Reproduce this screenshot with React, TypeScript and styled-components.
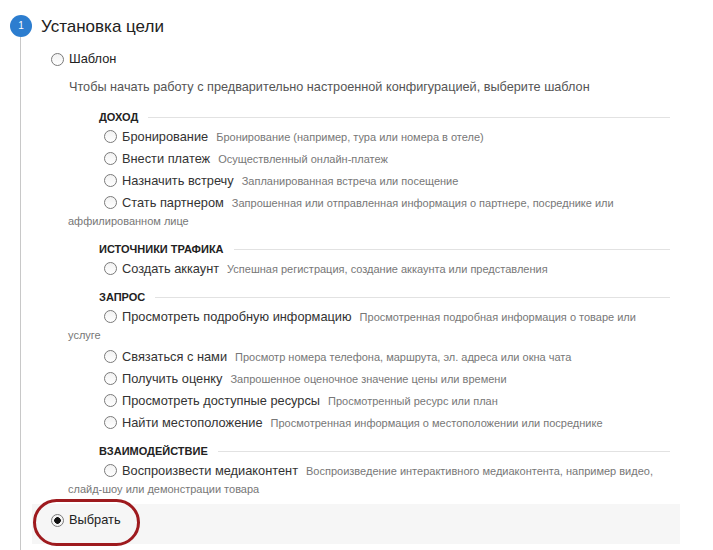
import styled, { createGlobalStyle } from 'styled-components'

const GlobalStyle = createGlobalStyle`
  html, body {
    margin: 0;
    padding: 0;
    background: #fff;
  }
  body {
    font-family: 'Liberation Sans', Arial, sans-serif;
    color: #333;
  }
`

const Step = styled.div`
  display: flex;
  min-height: 100vh;
  width: 713px;
  box-sizing: border-box;
`

const Rail = styled.div`
  width: 32px;
  flex: none;
  display: flex;
  flex-direction: column;
  align-items: flex-start;
  padding: 15px 0 0 10px;
  box-sizing: border-box;
`

const Badge = styled.div`
  width: 22px;
  height: 22px;
  border-radius: 50%;
  background: #2c7dcf;
  color: #fff;
  font-size: 10px;
  line-height: 22px;
  text-align: center;
  flex: none;
`

const RailLine = styled.div`
  flex: 1;
  width: 1px;
  margin-left: 10px;
  background: #c8c8c8;
`

const Content = styled.div`
  width: 648px;
  padding-top: 16px;
`

const Title = styled.div`
  padding-left: 9px;
  font-size: 17px;
  line-height: 22px;
  color: #222;
`

const Option = styled.div`
  position: relative;
  display: flex;
  align-items: center;
  padding-left: 19px;
  font-size: 12.8px;
  line-height: 18px;
  color: #222;
`

const TemplateOption = styled(Option)`
  margin-top: 12px;
`

const Intro = styled.div`
  margin-top: 10px;
  padding-left: 37px;
  font-size: 12.7px;
  line-height: 18px;
  color: #555;
`

const Groups = styled.div`
  margin: 0 10px 0 36px;
`

const Group = styled.div`
  margin-top: 11px;

  &:first-child {
    margin-top: 13px;
  }
`

const GroupHeader = styled.div`
  display: flex;
  align-items: center;
  gap: 10px;
  padding-left: 31px;
  font-size: 11px;
  font-weight: bold;
  line-height: 16px;
  color: #222;
  text-transform: uppercase;

  &::after {
    content: '';
    flex: 1;
    height: 1px;
    background: #e2e2e2;
  }
`

const Item = styled.div`
  margin-top: 4px;
  text-indent: 36px;
  font-size: 11px;
  line-height: 18px;

  &:nth-child(2) {
    margin-top: 3px;
  }
`

const Radio = styled.span<{ $checked?: boolean }>`
  display: inline-block;
  width: 13px;
  height: 13px;
  box-sizing: border-box;
  border: 1px solid #7a7a7a;
  border-radius: 50%;
  text-indent: 0;
  vertical-align: -2px;
  margin-right: 5px;
  flex: none;
  background: ${(p) =>
    p.$checked
      ? 'radial-gradient(circle, #111 0 3px, #f4f4f4 3.6px)'
      : 'linear-gradient(#f2f2f2, #fff)'};
`

const Label = styled.span`
  font-size: 12.8px;
  line-height: 1;
  color: #333;
  margin-right: 8px;
`

const Hint = styled.span`
  font-size: 11px;
  line-height: 1;
  color: #777;
`

const Selected = styled.div`
  position: relative;
  margin-top: 6px;
  padding: 7px 0 15px;
  background: #f6f6f6;
`

const Highlight = styled.div`
  position: absolute;
  left: 1px;
  top: -5px;
  width: 107px;
  height: 47px;
  box-sizing: border-box;
  border: 3px solid #9e1a1e;
  border-radius: 24px;
  pointer-events: none;
`

const groups: { title: string; items: [string, string][] }[] = [
  {
    title: 'Доход',
    items: [
      ['Бронирование', 'Бронирование (например, тура или номера в отеле)'],
      ['Внести платеж', 'Осуществленный онлайн-платеж'],
      ['Назначить встречу', 'Запланированная встреча или посещение'],
      ['Стать партнером', 'Запрошенная или отправленная информация о партнере, посреднике или аффилированном лице'],
    ],
  },
  {
    title: 'Источники трафика',
    items: [['Создать аккаунт', 'Успешная регистрация, создание аккаунта или представления']],
  },
  {
    title: 'Запрос',
    items: [
      ['Просмотреть подробную информацию', 'Просмотренная подробная информация о товаре или услуге'],
      ['Связаться с нами', 'Просмотр номера телефона, маршрута, эл. адреса или окна чата'],
      ['Получить оценку', 'Запрошенное оценочное значение цены или времени'],
      ['Просмотреть доступные ресурсы', 'Просмотренный ресурс или план'],
      ['Найти местоположение', 'Просмотренная информация о местоположении или посреднике'],
    ],
  },
  {
    title: 'Взаимодействие',
    items: [
      ['Воспроизвести медиаконтент', 'Воспроизведение интерактивного медиаконтента, например видео, слайд-шоу или демонстрации товара'],
    ],
  },
]

export default function App() {
  return (
    <>
      <GlobalStyle />
      <Step>
        <Rail>
          <Badge>1</Badge>
          <RailLine />
        </Rail>
        <Content>
          <Title>Установка цели</Title>
          <TemplateOption>
            <Radio />
            Шаблон
          </TemplateOption>
          <Intro>Чтобы начать работу с предварительно настроенной конфигурацией, выберите шаблон</Intro>
          <Groups>
            {groups.map((g) => (
              <Group key={g.title}>
                <GroupHeader>{g.title}</GroupHeader>
                {g.items.map(([label, hint]) => (
                  <Item key={label}>
                    <Radio />
                    <Label>{label}</Label>
                    <Hint>{hint}</Hint>
                  </Item>
                ))}
              </Group>
            ))}
          </Groups>
          <Selected>
            <Option>
              <Radio $checked />
              Выбрать
            </Option>
            <Highlight />
          </Selected>
        </Content>
      </Step>
    </>
  )
}
